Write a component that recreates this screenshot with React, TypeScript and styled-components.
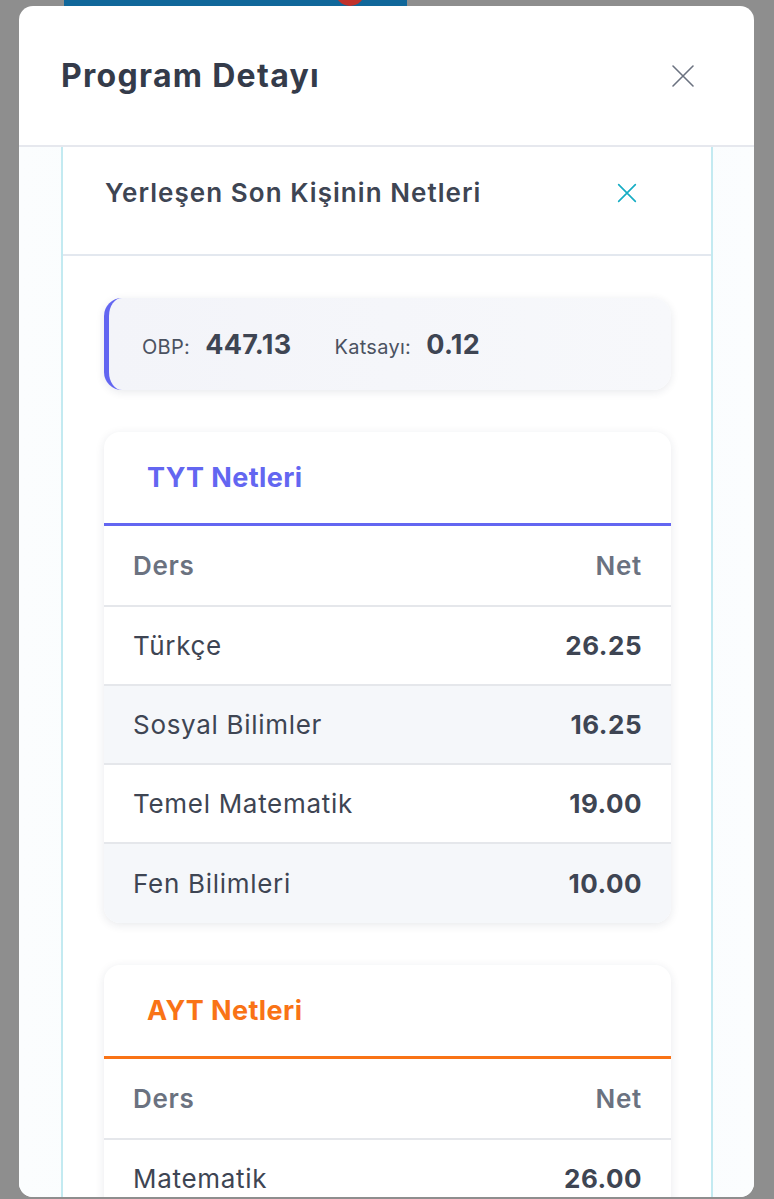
import React from 'react';
import styled, { createGlobalStyle } from 'styled-components';

const GlobalStyle = createGlobalStyle`
  html, body {
    margin: 0;
    padding: 0;
    background: #8e8e8e;
    font-family: "Inter", "Noto Sans", sans-serif;
    overflow: hidden;
  }
  * { box-sizing: border-box; }
`;

const Backdrop = styled.div`
  width: 774px;
  height: 1199px;
  background: #8e8e8e;
  overflow: hidden;
`;

const TopBar = styled.div`
  display: flex;
  width: 343px;
  height: 6px;
  margin-left: 64px;
  background: #10679a;
  overflow: hidden;
`;

const TopBadge = styled.div`
  width: 30px;
  height: 30px;
  margin: -24px 42px 0 auto;
  border-radius: 50%;
  background: #c0312b;
`;

const Modal = styled.div`
  width: 735px;
  height: 1191px;
  margin-left: 19px;
  background: #ffffff;
  border-radius: 14px;
  overflow: hidden;
  display: flex;
  flex-direction: column;
`;

const ModalHeader = styled.div`
  flex: 0 0 auto;
  height: 141px;
  display: flex;
  align-items: center;
  justify-content: space-between;
  padding: 0 56px 0 42px;
  border-bottom: 2px solid #e6e8ee;
`;

const ModalTitle = styled.h1`
  margin: 0;
  font-size: 32px;
  font-weight: 700;
  color: #343b4a;
  letter-spacing: 1.3px;
`;

const IconButton = styled.button<{ $color: string; $size: number }>`
  display: flex;
  align-items: center;
  justify-content: center;
  width: ${(p) => p.$size}px;
  height: ${(p) => p.$size}px;
  padding: 0;
  border: none;
  background: transparent;
  color: ${(p) => p.$color};
  cursor: pointer;
`;

const ModalBody = styled.div`
  flex: 1 1 auto;
  display: flex;
  padding: 0 41px 0 42px;
  background: linear-gradient(90deg, #fbfdfe 0%, #f6fbfc 50%, #fbfdfe 100%);
`;

const Panel = styled.div`
  flex: 1;
  display: flex;
  flex-direction: column;
  background: #ffffff;
  border-left: 2px solid #c3eaf1;
  border-right: 2px solid #c3eaf1;
`;

const PanelHeader = styled.div`
  height: 109px;
  display: flex;
  align-items: center;
  justify-content: space-between;
  padding: 0 72px 16px 42px;
  border-bottom: 2px solid #e3e8ef;
`;

const PanelTitle = styled.h2`
  margin: 0;
  font-size: 26px;
  font-weight: 600;
  color: #3e4553;
  letter-spacing: 1.05px;
`;

const PanelContent = styled.div`
  display: flex;
  flex-direction: column;
  gap: 42px;
  padding: 42px 40px 0 41px;
`;

const ScoreBox = styled.div`
  height: 92px;
  display: flex;
  align-items: center;
  padding-left: 33px;
  background: linear-gradient(90deg, #f3f4f9 0%, #f7f8fb 100%);
  border-left: 5px solid #6366f1;
  border-radius: 18px;
  box-shadow: 0 2px 8px rgba(30, 40, 70, 0.1);
`;

const ScoreItem = styled.div`
  display: flex;
  align-items: baseline;
  gap: 15px;
  margin-right: 43px;
`;

const ScoreLabel = styled.span`
  font-size: 20px;
  font-weight: 400;
  color: #4b5261;
  letter-spacing: 0.3px;
`;

const ScoreValue = styled.span`
  font-size: 27px;
  font-weight: 700;
  color: #3e4553;
  letter-spacing: 0.3px;
`;

const SectionCard = styled.div`
  background: #ffffff;
  border-radius: 16px;
  box-shadow: 0 2px 10px rgba(30, 40, 70, 0.1);
  overflow: hidden;
`;

const SectionTitle = styled.div<{ $accent: string }>`
  height: 94px;
  display: flex;
  align-items: center;
  padding-left: 43px;
  font-size: 27px;
  font-weight: 700;
  letter-spacing: 0.4px;
  color: ${(p) => p.$accent};
  border-bottom: 3px solid ${(p) => p.$accent};
`;

const TableRow = styled.div<{ $striped?: boolean; $head?: boolean }>`
  height: ${(p) => (p.$head ? 81 : 79)}px;
  display: flex;
  align-items: center;
  justify-content: space-between;
  padding: 0 29px 0 29px;
  background: ${(p) => (p.$striped ? '#f5f7fa' : '#ffffff')};
  border-bottom: 2px solid #e5e7eb;
  font-size: 26px;
  letter-spacing: 0.7px;
  font-weight: ${(p) => (p.$head ? 600 : 400)};
  color: ${(p) => (p.$head ? '#6b7280' : '#3e4553')};

  &:last-child {
    border-bottom: none;
  }
`;

const NetValue = styled.span`
  font-weight: 700;
  letter-spacing: 0.5px;
`;

const CloseIcon = ({ size, stroke }: { size: number; stroke: number }) => (
  <svg width={size} height={size} viewBox="0 0 24 24" fill="none">
    <path
      d="M2 2L22 22M22 2L2 22"
      stroke="currentColor"
      strokeWidth={stroke}
      strokeLinecap="round"
    />
  </svg>
);

type Row = { ders: string; net: string };

const tyt: Row[] = [
  { ders: 'Türkçe', net: '26.25' },
  { ders: 'Sosyal Bilimler', net: '16.25' },
  { ders: 'Temel Matematik', net: '19.00' },
  { ders: 'Fen Bilimleri', net: '10.00' },
];

const ayt: Row[] = [
  { ders: 'Matematik', net: '26.00' },
  { ders: 'Fizik', net: '7.00' },
  { ders: 'Kimya', net: '6.00' },
  { ders: 'Biyoloji', net: '5.00' },
];

const NetTable = ({ title, accent, rows }: { title: string; accent: string; rows: Row[] }) => (
  <SectionCard>
    <SectionTitle $accent={accent}>{title}</SectionTitle>
    <TableRow $head>
      <span>Ders</span>
      <span>Net</span>
    </TableRow>
    {rows.map((r, i) => (
      <TableRow key={r.ders} $striped={i % 2 === 1}>
        <span>{r.ders}</span>
        <NetValue>{r.net}</NetValue>
      </TableRow>
    ))}
  </SectionCard>
);

const App: React.FC = () => {
  return (
    <Backdrop>
      <GlobalStyle />
      <TopBar>
        <TopBadge />
      </TopBar>
      <Modal>
        <ModalHeader>
          <ModalTitle>Program Detayı</ModalTitle>
          <IconButton $color="#6b7280" $size={30}>
            <CloseIcon size={24} stroke={1.6} />
          </IconButton>
        </ModalHeader>
        <ModalBody>
          <Panel>
            <PanelHeader>
              <PanelTitle>Yerleşen Son Kişinin Netleri</PanelTitle>
              <IconButton $color="#17adc4" $size={24}>
                <CloseIcon size={20} stroke={2} />
              </IconButton>
            </PanelHeader>
            <PanelContent>
              <ScoreBox>
                <ScoreItem>
                  <ScoreLabel>OBP:</ScoreLabel>
                  <ScoreValue>447.13</ScoreValue>
                </ScoreItem>
                <ScoreItem>
                  <ScoreLabel>Katsayı:</ScoreLabel>
                  <ScoreValue>0.12</ScoreValue>
                </ScoreItem>
              </ScoreBox>
              <NetTable title="TYT Netleri" accent="#6366f1" rows={tyt} />
              <NetTable title="AYT Netleri" accent="#f97316" rows={ayt} />
            </PanelContent>
          </Panel>
        </ModalBody>
      </Modal>
    </Backdrop>
  );
};

export default App;
